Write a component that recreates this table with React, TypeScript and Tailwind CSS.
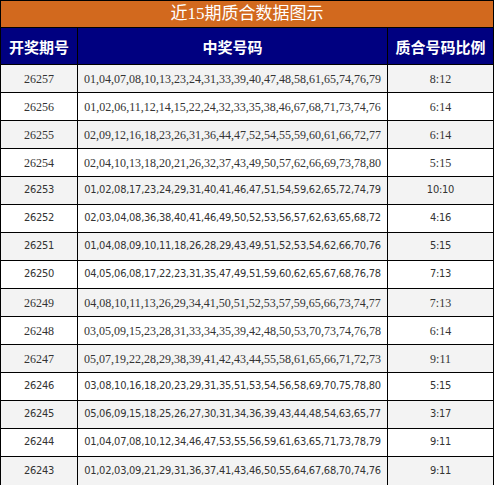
const rows: [string, string, string, boolean][] = [
  ["26257", "01,04,07,08,10,13,23,24,31,33,39,40,47,48,58,61,65,74,76,79", "8:12", true],
  ["26256", "01,02,06,11,12,14,15,22,24,32,33,35,38,46,67,68,71,73,74,76", "6:14", true],
  ["26255", "02,09,12,16,18,23,26,31,36,44,47,52,54,55,59,60,61,66,72,77", "6:14", true],
  ["26254", "02,04,10,13,18,20,21,26,32,37,43,49,50,57,62,66,69,73,78,80", "5:15", true],
  ["26253", "01,02,08,17,23,24,29,31,40,41,46,47,51,54,59,62,65,72,74,79", "10:10", false],
  ["26252", "02,03,04,08,36,38,40,41,46,49,50,52,53,56,57,62,63,65,68,72", "4:16", false],
  ["26251", "01,04,08,09,10,11,18,26,28,29,43,49,51,52,53,54,62,66,70,76", "5:15", false],
  ["26250", "04,05,06,08,17,22,23,31,35,47,49,51,59,60,62,65,67,68,76,78", "7:13", false],
  ["26249", "04,08,10,11,13,26,29,34,41,50,51,52,53,57,59,65,66,73,74,77", "7:13", true],
  ["26248", "03,05,09,15,23,28,31,33,34,35,39,42,48,50,53,70,73,74,76,78", "6:14", true],
  ["26247", "05,07,19,22,28,29,38,39,41,42,43,44,55,58,61,65,66,71,72,73", "9:11", true],
  ["26246", "03,08,10,16,18,20,23,29,31,35,51,53,54,56,58,69,70,75,78,80", "5:15", false],
  ["26245", "05,06,09,15,18,25,26,27,30,31,34,36,39,43,44,48,54,63,65,77", "3:17", false],
  ["26244", "01,04,07,08,10,12,34,46,47,53,55,56,59,61,63,65,71,73,78,79", "9:11", false],
  ["26243", "01,02,03,09,21,29,31,36,37,41,43,46,50,55,64,67,68,70,74,76", "9:11", false],
];

export default function App() {
  return (
    <div className="w-[494px] border border-black bg-white">
      {/* title */}
      <div className="h-[27px] border-b border-black bg-[#d2691e] flex items-center justify-center text-white text-[17px] font-['Liberation_Serif','Noto_Sans_CJK_SC',serif]">
        近15期质合数据图示
      </div>

      {/* header */}
      <div className="flex h-[37px] border-b border-black bg-[#000080] text-white text-[15px] font-bold font-['Noto_Sans_CJK_SC',sans-serif]">
        <div className="w-[77px] border-r border-black flex items-center justify-center pt-[3px]">开奖期号</div>
        <div className="w-[310px] border-r border-black flex items-center justify-center pt-[3px]">中奖号码</div>
        <div className="flex-1 flex items-center justify-center pt-[3px]">质合号码比例</div>
      </div>

      {rows.map(([issue, nums, ratio, serif], i) => (
        <div
          key={issue}
          className={`flex h-[28px] text-[#333] ${i < rows.length - 1 ? "border-b border-black" : ""} ${
            i % 2 === 0 ? "bg-[#f3f3f3]" : "bg-white"
          } ${
            serif
              ? "text-[12px] font-['Liberation_Serif',serif]"
              : "text-[11px] tracking-[-0.25px] font-['DejaVu_Sans_Condensed','DejaVu_Sans',sans-serif] font-stretch-condensed"
          }`}
        >
          <div className="w-[77px] border-r border-black flex items-center justify-center">{issue}</div>
          <div className="w-[310px] border-r border-black flex items-center justify-center">{nums}</div>
          <div className="flex-1 flex items-center justify-center">{ratio}</div>
        </div>
      ))}
    </div>
  );
}
